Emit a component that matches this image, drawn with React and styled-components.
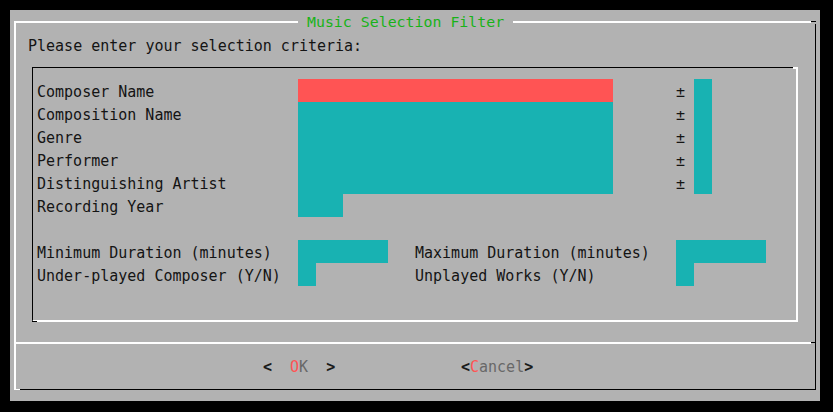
import React from "react";
import styled, { createGlobalStyle } from "styled-components";

const CELL = 9;
const ROW = 23;
const BG = "#b2b2b2";
const CYAN = "#18b2b2";
const RED = "#ff5454";
const GREEN = "#18b218";
const DIM = "#686868";

const Global = createGlobalStyle`
  html, body {
    margin: 0;
    padding: 0;
    background: #000;
    width: 833px;
    height: 412px;
    overflow: hidden;
  }
  * { box-sizing: border-box; }
`;

const Screen = styled.div`
  padding: 10px;
  width: 833px;
  height: 412px;
`;

const Terminal = styled.div`
  width: 810px;
  height: 391px;
  background: ${BG};
  padding: 11px 0 0 4px;
  font-family: "DejaVu Sans Mono", "Liberation Mono", monospace;
  font-size: 15px;
  color: #141414;
`;

const Dialog = styled.div`
  position: relative;
  width: 802px;
  height: 369px;
  border-top: 2px solid #fff;
  border-left: 2px solid #fff;
  border-right: 1px solid #000;
  border-bottom: 1px solid #000;
  display: flex;
  flex-direction: column;

  &::after {
    content: "";
    position: absolute;
    top: -2px;
    right: -1px;
    width: 5px;
    height: 2px;
    border-top: 1px solid #000;
    background: ${BG};
  }
  &::before {
    content: "";
    position: absolute;
    bottom: -1px;
    left: -2px;
    width: 6px;
    height: 1px;
    background: #fff;
  }
`;

const Title = styled.div`
  position: absolute;
  top: -13px;
  left: 282px;
  height: ${ROW}px;
  line-height: 25px;
  background: ${BG};
  color: ${GREEN};
  font-family: "DejaVu Sans Mono", monospace;
  font-size: 14.9px;
  white-space: pre;
`;

const Prompt = styled.div`
  margin-top: 10px;
  padding-left: 12px;
  height: ${ROW}px;
  line-height: 27px;
  white-space: pre;
`;

const FormBox = styled.div`
  position: relative;
  margin: 11px 0 0 16px;
  width: 766px;
  height: 255px;
  border-top: 1px solid #000;
  border-left: 1px solid #000;
  border-right: 2px solid #fff;
  border-bottom: 2px solid #fff;
  padding: 11px 0 0 4px;
  display: flex;
  flex-direction: column;

  &::after {
    content: "";
    position: absolute;
    top: -1px;
    right: -2px;
    width: 5px;
    height: 2px;
    background: #fff;
  }
  &::before {
    content: "";
    position: absolute;
    bottom: -2px;
    left: -1px;
    width: 5px;
    height: 1px;
    background: #000;
  }
`;

const Row = styled.div`
  display: flex;
  align-items: flex-start;
  height: ${ROW}px;
`;

const Half = styled.div`
  display: flex;
  align-items: flex-start;
  width: ${(p) => p.$cells * CELL}px;
`;

const Label = styled.span`
  width: ${29 * CELL}px;
  height: ${ROW}px;
  line-height: 27px;
  white-space: pre;
`;

const Field = styled.span`
  display: block;
  width: ${(p) => p.$cells * CELL}px;
  height: ${ROW}px;
  background: ${(p) => (p.$active ? RED : CYAN)};
`;

const PlusMinus = styled.span`
  margin-left: ${7 * CELL}px;
  width: ${2 * CELL}px;
  height: ${ROW}px;
  line-height: 27px;
`;

const Separator = styled.div`
  margin-top: 20px;
  display: flex;
  height: 2px;
`;

const SepLine = styled.div`
  flex: 1;
  background: #fff;
`;

const SepEnd = styled.div`
  width: 4px;
  height: 1px;
  background: #000;
`;

const ButtonRow = styled.div`
  margin-top: 11px;
  height: ${ROW}px;
  padding-left: 247px;
  display: flex;
  gap: ${14 * CELL}px;
`;

const Button = styled.span`
  display: flex;
  width: ${(p) => p.$cells * CELL}px;
  height: ${ROW}px;
  line-height: 25px;
  white-space: pre;
`;

const Bracket = styled.span`
  width: ${CELL}px;
  font-weight: bold;
  color: #1a1a1a;
  text-align: center;
`;

const BtnText = styled.span`
  font-family: "DejaVu Sans Mono", monospace;
  font-size: 15px;
  color: ${DIM};
  white-space: pre;
`;

const Hot = styled.span`
  color: ${RED};
`;

const mainFields = [
  { label: "Composer Name", active: true },
  { label: "Composition Name" },
  { label: "Genre" },
  { label: "Performer" },
  { label: "Distinguishing Artist" },
];

export default function App() {
  return (
    <>
      <Global />
      <Screen>
        <Terminal>
          <Dialog>
            <Title> Music Selection Filter </Title>
            <Prompt>Please enter your selection criteria:</Prompt>
            <FormBox>
              {mainFields.map((f) => (
                <Row key={f.label}>
                  <Label>{f.label}</Label>
                  <Field $cells={35} $active={f.active} />
                  <PlusMinus>±</PlusMinus>
                  <Field $cells={2} />
                </Row>
              ))}
              <Row>
                <Label>Recording Year</Label>
                <Field $cells={5} />
              </Row>
              <Row />
              <Row>
                <Half $cells={42}>
                  <Label>Minimum Duration (minutes)</Label>
                  <Field $cells={10} />
                </Half>
                <Half $cells={40}>
                  <Label>Maximum Duration (minutes)</Label>
                  <Field $cells={10} />
                </Half>
              </Row>
              <Row>
                <Half $cells={42}>
                  <Label>Under-played Composer (Y/N)</Label>
                  <Field $cells={2} />
                </Half>
                <Half $cells={40}>
                  <Label>Unplayed Works (Y/N)</Label>
                  <Field $cells={2} />
                </Half>
              </Row>
            </FormBox>
            <Separator>
              <SepLine />
              <SepEnd />
            </Separator>
            <ButtonRow>
              <Button $cells={8}>
                <Bracket>&lt;</Bracket>
                <BtnText>{"  "}<Hot>O</Hot>K{"  "}</BtnText>
                <Bracket>&gt;</Bracket>
              </Button>
              <Button $cells={8}>
                <Bracket>&lt;</Bracket>
                <BtnText><Hot>C</Hot>ancel</BtnText>
                <Bracket>&gt;</Bracket>
              </Button>
            </ButtonRow>
          </Dialog>
        </Terminal>
      </Screen>
    </>
  );
}
